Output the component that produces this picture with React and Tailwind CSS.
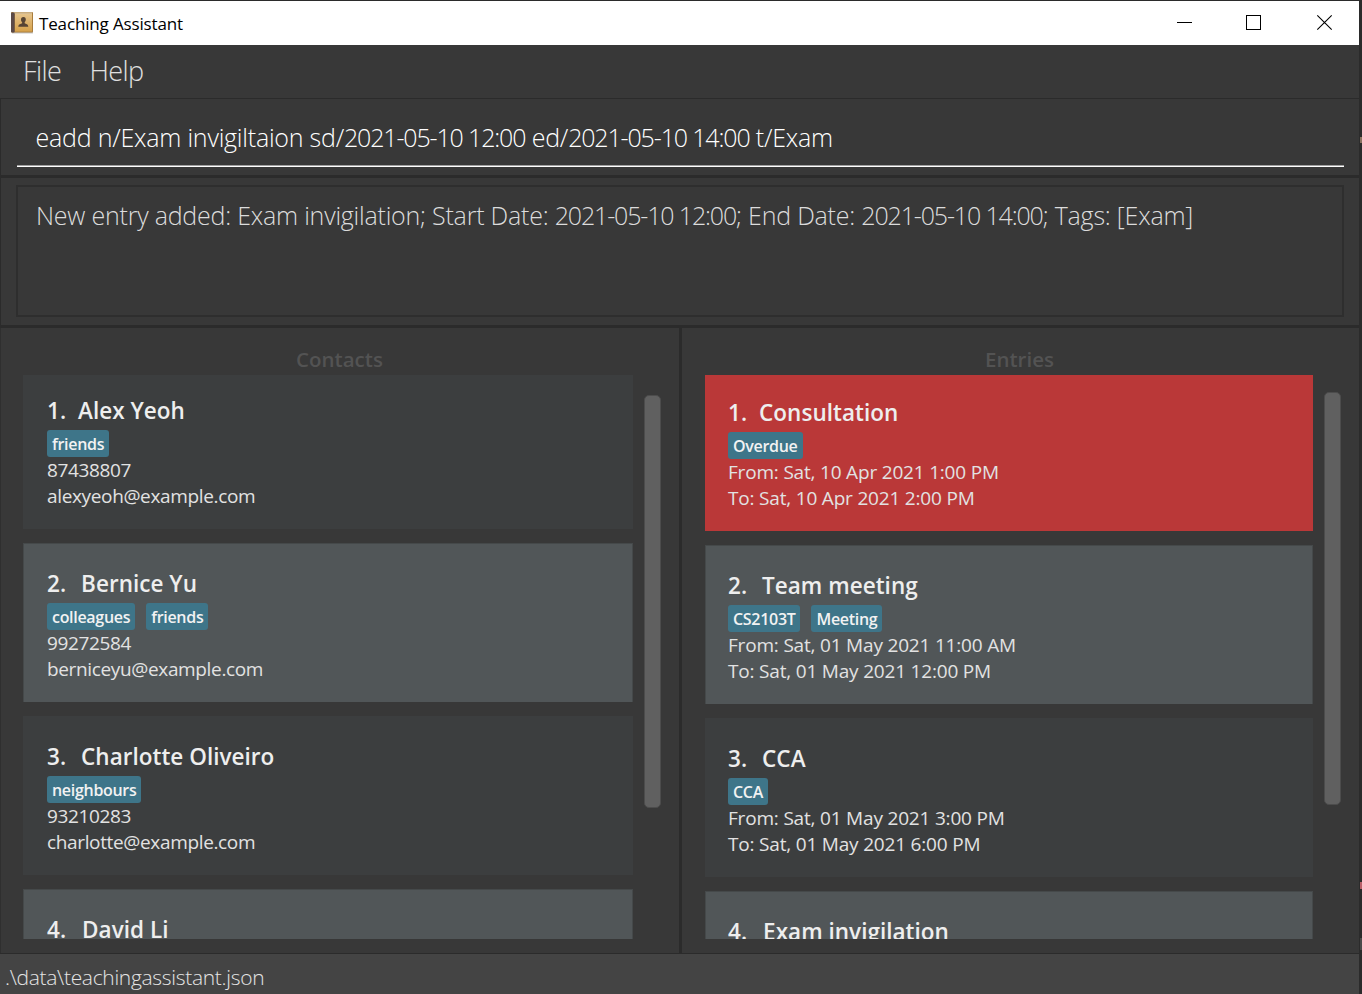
const contacts = [
  { name: "Alex Yeoh", tags: ["friends"], lines: ["87438807", "alexyeoh@example.com"] },
  { name: "Bernice Yu", tags: ["colleagues", "friends"], lines: ["99272584", "berniceyu@example.com"] },
  { name: "Charlotte Oliveiro", tags: ["neighbours"], lines: ["93210283", "charlotte@example.com"] },
  { name: "David Li", tags: [], lines: [] },
];

const entries = [
  { name: "Consultation", tags: ["Overdue"], lines: ["From: Sat, 10 Apr 2021 1:00 PM", "To: Sat, 10 Apr 2021 2:00 PM"], overdue: true },
  { name: "Team meeting", tags: ["CS2103T", "Meeting"], lines: ["From: Sat, 01 May 2021 11:00 AM", "To: Sat, 01 May 2021 12:00 PM"] },
  { name: "CCA", tags: ["CCA"], lines: ["From: Sat, 01 May 2021 3:00 PM", "To: Sat, 01 May 2021 6:00 PM"] },
  { name: "Exam invigilation", tags: [], lines: [] },
];

// Sets timestamps tighter than the words around them.
function Timestamped({ text }) {
  return text.split(/(\d{4}-\d\d-\d\d \d\d:\d\d)/).map((part, i) => (
    <span key={i} className={i % 2 ? "tracking-[-1.150px]" : "tracking-[-0.22px]"}>{part}</span>
  ));
}

function Card({ item, index, firstClass, inset, lineClass }) {
  const size = index === 0 ? firstClass : "h-[159px] pt-[25px]";
  const even = index % 2 === 1;
  const color = item.overdue
    ? "bg-[#ba3838]"
    : even
      ? "bg-[#515658] border border-b-0 border-[#45494a]"
      : "bg-[#3c3e3f]";
  const gaps = ["gap-[12px]", "gap-[15px]", "gap-[15px]", "gap-[16px]"];
  return (
    <li className={`shrink-0 ${size} ${color}`}>
      <div className={`${inset} ${even ? "-mx-px -mt-px" : ""}`}>
        <h3 className={`flex h-[35px] whitespace-pre text-[22.5px] leading-[32px] font-semibold tracking-[0.02px] text-[#eeeeee] ${gaps[index]}`}>
          <span>{index + 1}.</span>
          <span>{item.name}</span>
        </h3>
        <div className="flex gap-[11px]">
          {item.tags.map((t) => (
            <span key={t} className="h-[27px] rounded-[3px] bg-[#3e7589] px-[5px] text-[16px] leading-[28px] font-semibold tracking-[-0.3px] text-[#f2f2f2]">
              {t}
            </span>
          ))}
        </div>
        {item.lines.map((l) => (
          <p key={l} className={`h-[26px] text-[19px] leading-[26px] whitespace-pre text-[#e2e2e2] ${lineClass}`}>{l}</p>
        ))}
      </div>
    </li>
  );
}

function Panel({ title, items, className, titleClass, firstClass, barClass, inset, lineClass }) {
  return (
    <section className={`flex flex-col ${className}`}>
      <h2 className={`mt-[15px] h-[32px] text-center text-[20.5px] leading-[32px] font-semibold text-[#535353] ${titleClass}`}>{title}</h2>
      <div className="flex h-[564px]">
        <ul className="flex h-[564px] flex-1 flex-col gap-[14px] overflow-hidden">
          {items.map((item, i) => (
            <Card key={item.name} item={item} index={i} firstClass={firstClass} inset={inset} lineClass={lineClass} />
          ))}
        </ul>
        <div className={`mr-[18px] ml-[11px] h-[413px] w-[17px] rounded-[5px] border border-[#4c4c4c] bg-[#606060] ${barClass}`} />
      </div>
    </section>
  );
}

function BookIcon() {
  return (
    <svg width="22" height="22" viewBox="0 0 22 22">
      <defs>
        <linearGradient id="cover" x1="0" y1="0" x2="0" y2="1">
          <stop offset="0" stopColor="#e6c48c" />
          <stop offset="1" stopColor="#d6a14a" />
        </linearGradient>
      </defs>
      <rect x="1" y="20" width="21" height="1.5" fill="#c9c9c9" />
      <rect x="0" y="0" width="22" height="20.5" rx="1" fill="#a87c3c" />
      <rect x="4" y="1.6" width="17" height="18" fill="url(#cover)" />
      <rect x="2" y="0.5" width="19" height="1" fill="#e9dcc0" />
      <rect x="0" y="0.5" width="3.6" height="20" rx="1" fill="#5b4a48" />
      <path d="M12.4 5c1.800 0 2.500 1.200 2.400 2.700-.1 1.200-.6 1.900-1.100 2.400v1.200c1.200.7 3.400.8 3.600 3.400H7.300c.2-2.600 2.600-2.700 3.800-3.400v-1.200C10.500 9.600 10 8.900 10 7.700 9.900 6.200 10.700 5 12.400 5z" fill="#574434" />
    </svg>
  );
}

export default function App() {
  return (
    <div className="flex h-[994px] w-[1362px] overflow-hidden bg-[#2b2b2b] font-['Open_Sans','Noto_Sans',sans-serif]">
      <div className="flex w-[1359px] flex-col bg-[#383838]">
        <header className="flex h-[45px] items-start border-t border-[#2b2b2b] bg-white pl-[11px]">
          <div className="mt-[11px]"><BookIcon /></div>
          <h1 className="ml-[6px] mt-[10px] w-[1133px] text-[17px] leading-[26px] tracking-[-0.15px] text-black">Teaching Assistant</h1>
          <svg width="180" height="44" viewBox="0 0 180 44" fill="none" stroke="#000" className="shrink-0">
            <path d="M5 21.500h15M74.500 14.500h14v14h-14z" shapeRendering="crispEdges" />
            <path d="M145.300 14.300l14.400 14.400M159.700 14.300l-14.400 14.400" strokeWidth="1.100" />
          </svg>
        </header>
        <nav className="flex h-[53px] gap-[28px] pl-[23px] text-[27px] leading-[51px] font-light tracking-[-0.55px] text-[#e0e0e0]">
          <span>File</span>
          <span>Help</span>
        </nav>
        <div className="h-[77px] border-t border-l border-[#2b2b2b] px-4 pr-[15px]">
          <div className="h-[67px] border-b border-[#a0a0a0] pl-[18.5px] text-[25px] leading-[77px] font-light whitespace-pre text-white">
            <Timestamped text="eadd n/Exam invigiltaion sd/2021-05-10 12:00 ed/2021-05-10 14:00 t/Exam" />
          </div>
          <div className="h-px bg-white" />
        </div>
        <div className="h-[150px] border-t-[3px] border-l border-[#2b2b2b] pt-[7px] pl-[15px]">
          <div className="h-[132px] w-[1328px] border-2 border-[#2e2e2e] pl-[18px] text-[25px] leading-[56px] font-light whitespace-pre text-[#dcdcdc]">
            <Timestamped text="New entry added: Exam invigilation; Start Date: 2021-05-10 12:00; End Date: 2021-05-10 14:00; Tags: [Exam]" />
          </div>
        </div>
        <main className="flex h-[629px] border-t-[3px] border-b border-[#2b2b2b]">
          <Panel title="Contacts" items={contacts} className="w-[679px] border-l border-[#2f2f2f] pl-[22px]" titleClass="w-[633px]" inset="pl-6" lineClass="tracking-[-0.35px]" firstClass="h-[154px] pt-[20px]" barClass="mt-[20px]" />
          <Panel title="Entries" items={entries} className="w-[680px] border-l-[3px] border-[#2b2b2b] pl-[23px]" titleClass="w-[629px]" inset="pl-[23px]" lineClass="tracking-[-0.19px]" firstClass="h-[156px] pt-[22px]" barClass="mt-[17px]" />
        </main>
        <footer className="h-[40px] bg-[#444444] pl-[5px] text-[21px] leading-[47px] font-light tracking-[-0.31px] text-[#e4e4e4]">
          .\data\teachingassistant.json
        </footer>
      </div>
      <div className="flex w-[3px] flex-col items-end">
        <div className="mt-[137px] h-[6px] w-[2px] bg-[#8a7260]" />
        <div className="mt-[739px] h-[7px] w-[2px] bg-[#b85f68]" />
        <div className="mt-[49px] h-[12px] w-[2px] bg-[#4a4a4a]" />
      </div>
    </div>
  );
}
